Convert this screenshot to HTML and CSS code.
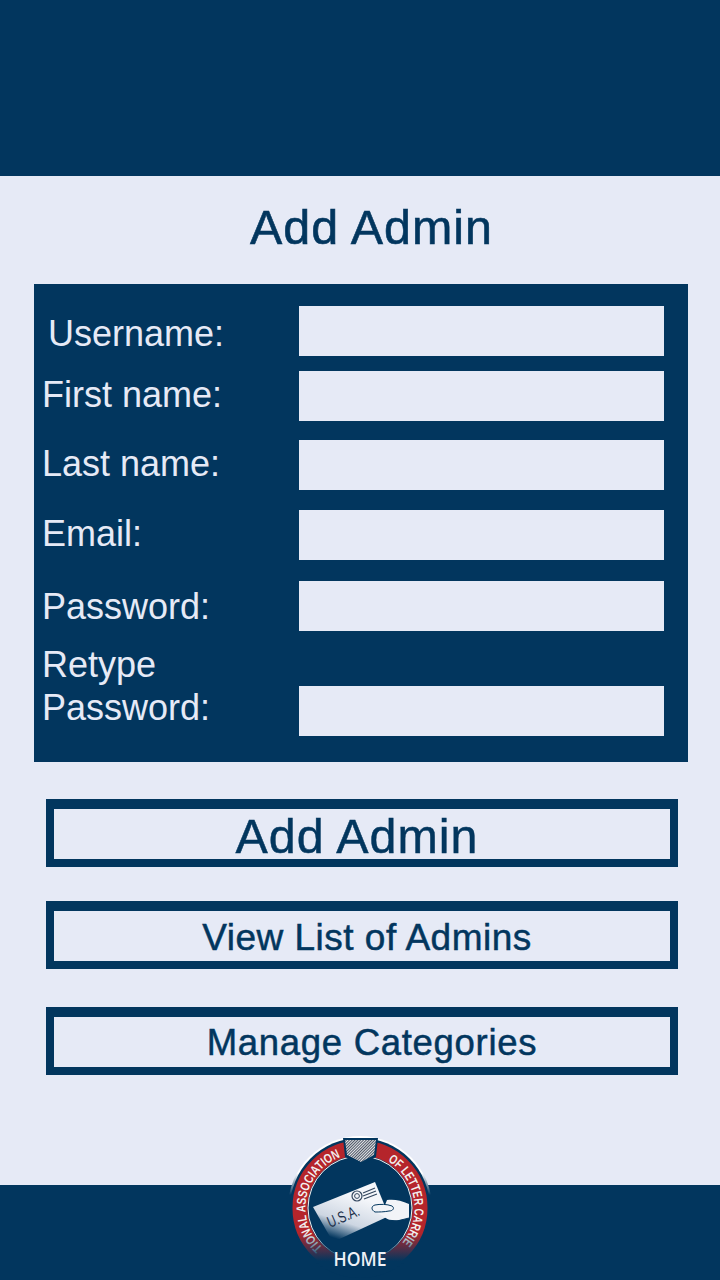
FILE: index.html
```html
<!DOCTYPE html>
<html>
<head>
    <meta charset="utf-8">
    <meta name="viewport" content="width=device-width, initial-scale=1.0">
    <title>Add Admin</title>
    <link rel="stylesheet" href="styles.css">
</head>

<body>
    <div class="top-bar"></div>

    <h1 class="title">Add Admin</h1>

    <form class="admin-form">
        <div class="row">
            <label class="label label-username" for="username">Username:</label>
            <input class="field" type="text" id="username">
        </div>
        <div class="row row-first">
            <label class="label label-first" for="first">First name:</label>
            <input class="field" type="text" id="first">
        </div>
        <div class="row row-last">
            <label class="label label-last" for="last">Last name:</label>
            <input class="field" type="text" id="last">
        </div>
        <div class="row row-email">
            <label class="label label-email" for="email">Email:</label>
            <input class="field" type="text" id="email">
        </div>
        <div class="row row-password">
            <label class="label label-password" for="password">Password:</label>
            <input class="field" type="password" id="password">
        </div>
        <div class="row row-retype">
            <label class="label label-retype" for="retype">Retype<br>Password:</label>
            <input class="field" type="password" id="retype">
        </div>
    </form>

    <a class="btn btn-add" href="#"><span>Add Admin</span></a>
    <a class="btn btn-list" href="#"><span>View List of Admins</span></a>
    <a class="btn btn-manage" href="#"><span>Manage Categories</span></a>

    <div class="bottom-bar">
        <a class="home-logo" href="#">
            <svg viewBox="0 0 150 147" width="150" height="147">
                <defs>
                    <linearGradient id="ringFade" gradientUnits="userSpaceOnUse" x1="0" y1="100" x2="0" y2="128">
                        <stop offset="0" stop-color="#b5252b"/>
                        <stop offset="1" stop-color="#02365e"/>
                    </linearGradient>
                    <linearGradient id="textFade" gradientUnits="userSpaceOnUse" x1="0" y1="100" x2="0" y2="125">
                        <stop offset="0" stop-color="#f2f0ee"/>
                        <stop offset="1" stop-color="#02365e"/>
                    </linearGradient>
                    <linearGradient id="letterFade" gradientUnits="userSpaceOnUse" x1="66" y1="62" x2="52" y2="106">
                        <stop offset="0" stop-color="#f4f6fa"/>
                        <stop offset="0.6" stop-color="#cdd6e2"/>
                        <stop offset="1" stop-color="#02365e"/>
                    </linearGradient>
                    <linearGradient id="haloFade" gradientUnits="userSpaceOnUse" x1="0" y1="40" x2="0" y2="62">
                        <stop offset="0" stop-color="#ffffff"/>
                        <stop offset="1" stop-color="#02365e"/>
                    </linearGradient>
                    <pattern id="shieldLines" width="2" height="2" patternUnits="userSpaceOnUse" patternTransform="rotate(45)">
                        <rect width="2" height="2" fill="#e6e6ea"/>
                        <rect width="1" height="2" fill="#4b5563"/>
                    </pattern>
                    <path id="arcLeft" d="M75 129.500 A54.500 54.500 0 0 1 75 20.500"/>
                    <path id="arcRight" d="M75 20.500 A54.500 54.500 0 0 1 75 129.500"/>
                </defs>

                <circle cx="75" cy="75" r="72" fill="url(#haloFade)"/>
                <circle cx="75" cy="75" r="70" fill="#02365e"/>
                <circle cx="75" cy="75" r="60" fill="none" stroke="url(#ringFade)" stroke-width="15"/>
                <circle cx="75" cy="75" r="52" fill="#02365e" stroke="url(#textFade)" stroke-width="1"/>

                <text class="ring-text" fill="url(#textFade)"><textPath href="#arcLeft" startOffset="41" textLength="110" lengthAdjust="spacingAndGlyphs">TIONAL ASSOCIATION</textPath></text>
                <text class="ring-text" fill="url(#textFade)"><textPath href="#arcRight" startOffset="29" textLength="94" lengthAdjust="spacingAndGlyphs">OF LETTER CARRIE</textPath></text>

                <path d="M58 5 H93 L91 24 L76 32 L60 24 Z" fill="#02365e"/>
                <path d="M60 7 H91 L89 22 L76 29 L62 22 Z" fill="url(#shieldLines)"/>

                <path d="M28 74 L90 49 L104 83 L48 109 Z" fill="url(#letterFade)"/>
                <circle cx="72" cy="63" r="5" fill="none" stroke="#33475f" stroke-width="1.2"/>
                <circle cx="72" cy="63" r="2.400" fill="none" stroke="#33475f" stroke-width="1"/>
                <path d="M78 60 L90 55 M78 63 L91 58 M79 66 L92 61" stroke="#33475f" stroke-width="1.2"/>
                <text class="usa-text" transform="translate(45 95) rotate(-23) scale(0.72 1)">U.S.A.</text>

                <path d="M102 67 C108 66 116 67 124 71 L124 85 C118 87 110 88 104 87 L96 82 L90 79 C86 77 86 73 90 72 L100 72 Z" fill="#f2f4f8"/>
                <path d="M90 72 C95 71 102 71 107 73 C110 75 108 78 104 78 C99 79 94 79 90 79 C86 77 86 73 90 72 Z" fill="#f2f4f8" stroke="#02365e" stroke-width="1"/>
                <path d="M102 87 L112 88 L124 85" fill="none" stroke="#02365e" stroke-width="1"/>

                <text class="home-text" x="48.500" y="133" textLength="53" lengthAdjust="spacingAndGlyphs">HOME</text>
            </svg>
        </a>
    </div>
</body>
</html>
```

FILE: styles.css
```css
body {
    position: relative;
    width: 720px;
    height: 1280px;
    margin: 0;
    overflow: hidden;
    background: #e6eaf6;
    font-family: "Liberation Sans", Arial, sans-serif;
    color: #02365e;
}

.top-bar {
    height: 176px;
    background: #02365e;
}

.title {
    margin: 22px 0 0;
    padding-left: 23px;
    font-size: 48.4px;
    font-weight: normal;
    line-height: 58px;
    letter-spacing: 1px;
    text-align: center;
    -webkit-text-stroke: 0.6px #02365e;
}

.admin-form {
    box-sizing: border-box;
    width: 654px;
    height: 478px;
    margin: 28px 0 0 34px;
    padding: 22px 24px 26px 8px;
    background: #02365e;
}

.row {
    display: flex;
    justify-content: space-between;
    align-items: flex-start;
}

.row-first { margin-top: 15px; }
.row-last { margin-top: 19px; }
.row-email { margin-top: 20px; }
.row-password { margin-top: 21px; }
.row-retype { min-height: 93px; margin-top: 12px; align-items: flex-end; }

.label {
    font-size: 36px;
    line-height: 43px;
    color: #e6eaf6;
}

.label-username { padding: 6px 0 0 6px; }
.label-first { padding-top: 2px; }
.label-last { padding-top: 2px; }
.label-email { padding-top: 2px; }
.label-password { padding-top: 4px; }
.label-retype { align-self: flex-start; }

.field {
    box-sizing: border-box;
    width: 365px;
    height: 50px;
    padding: 0 8px;
    border: 0;
    border-radius: 0;
    background: #e6eaf6;
}

.btn {
    display: block;
    box-sizing: border-box;
    width: 632px;
    height: 68px;
    margin-left: 46px;
    border: 8px solid #02365e;
    border-top-width: 10px;
    color: #02365e;
    text-align: center;
    text-decoration: none;
    -webkit-text-stroke: 0.5px #02365e;
}

.btn-add {
    margin-top: 37px;
    padding-right: 10px;
    font-size: 48.4px;
    line-height: 54px;
    letter-spacing: 1px;
}

.btn-list {
    margin-top: 34px;
    padding-left: 10px;
    font-size: 37px;
    line-height: 54px;
    letter-spacing: 0.5px;
}

.btn-manage {
    margin-top: 38px;
    padding-left: 20px;
    font-size: 36.5px;
    line-height: 52px;
    letter-spacing: 0.7px;
}

.bottom-bar {
    height: 95px;
    margin-top: 110px;
    background: #02365e;
}

/* sits over the edge of the bottom bar */
.home-logo {
    position: absolute;
    left: 285px;
    top: 1133px;
    display: block;
    width: 150px;
    height: 147px;
}

.home-logo svg {
    display: block;
}

.ring-text {
    font-family: "Liberation Sans", Arial, sans-serif;
    font-size: 13px;
    font-weight: bold;
}

.usa-text {
    font-family: "Liberation Sans", Arial, sans-serif;
    font-size: 16px;
    fill: #1c2f4a;
}

.home-text {
    font-family: "Open Sans", "Noto Sans", sans-serif;
    font-size: 19.5px;
    font-weight: 600;
    fill: #eef1f7;
}
```
